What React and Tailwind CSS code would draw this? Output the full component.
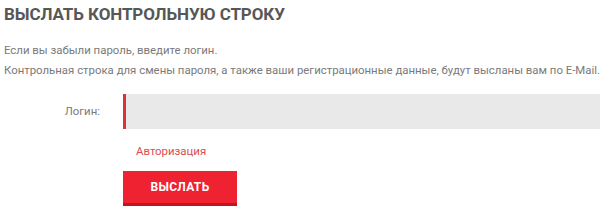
export default function App() {
  return (
    <div className="w-[600px] h-[207px] overflow-hidden bg-white pl-[4px] pt-[3px]" style={{ fontFamily: "Roboto, 'Noto Sans', sans-serif" }}>
      <h1 className="text-[17px] leading-[22px] font-bold text-[#575757] tracking-[-0.1px]">ВЫСЛАТЬ КОНТРОЛЬНУЮ СТРОКУ</h1>
      <div className="mt-[15px] text-[11.4px] leading-[20px] text-[#7a7a7a] whitespace-nowrap">
        <p>Если вы забыли пароль, введите логин.</p>
        <p>Контрольная строка для смены пароля, а также ваши регистрационные данные, будут высланы вам по E-Mail.</p>
      </div>
      <div className="mt-[14px] flex items-center">
        <label className="w-[97px] pr-[1px] text-right text-[11.4px] text-[#7a7a7a]">Логин:</label>
        <div className="ml-[22px] flex-1 h-[35px] bg-[#e9e9e9] border-l-[3px] border-[#d9343c]" />
      </div>
      <div className="ml-[132px] mt-[14px] text-[11.4px] leading-[16px] text-[#dd4a52]">Авторизация</div>
      <button className="block ml-[119px] mt-[12px] w-[114px] h-[35px] bg-[#ee2230] border-b-[3px] border-[#c5141f] text-white text-[12px] font-bold tracking-[0.3px]">ВЫСЛАТЬ</button>
    </div>
  );
}
